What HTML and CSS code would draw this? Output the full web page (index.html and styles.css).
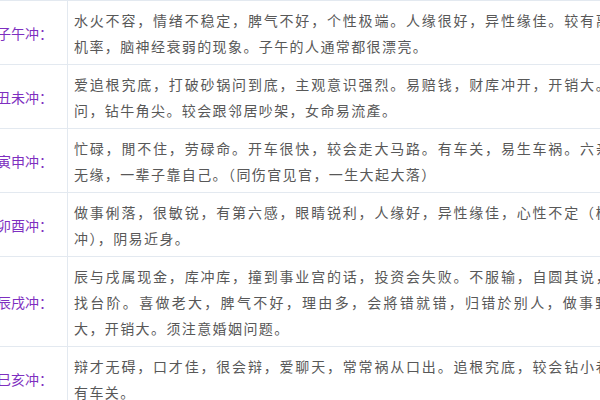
FILE: index.html
```html
<!DOCTYPE html>
<html lang="zh-CN">
<head>
<meta charset="utf-8">
<title>六冲</title>
<link rel="stylesheet" href="styles.css">
</head>
<body>
<div class="viewport">
  <div class="table">
    <div class="row">
      <div class="label">子午冲：</div>
      <div class="text">水火不容，情绪不稳定，脾气不好，个性极端。人缘很好，异性缘佳。较有离婚机率，脑神经衰弱的现象。子午的人通常都很漂亮。</div>
    </div>
    <div class="row">
      <div class="label">丑未冲：</div>
      <div class="text">爱追根究底，打破砂锅问到底，主观意识强烈。易赔钱，财库冲开，开销大。好问，钻牛角尖。较会跟邻居吵架，女命易流產。</div>
    </div>
    <div class="row">
      <div class="label">寅申冲：</div>
      <div class="text">忙碌，閒不住，劳碌命。开车很快，较会走大马路。有车关，易生车祸。六亲较无缘，一辈子靠自己。（同伤官见官，一生大起大落）</div>
    </div>
    <div class="row">
      <div class="label">卯酉冲：</div>
      <div class="text">做事俐落，很敏锐，有第六感，眼睛锐利，人缘好，异性缘佳，心性不定（桃花冲），阴易近身。</div>
    </div>
    <div class="row">
      <div class="label">辰戌冲：</div>
      <div class="text">辰与戌属现金，库冲库，撞到事业宫的话，投资会失败。不服输，自圆其说，会找台阶。喜做老大，脾气不好，理由多，会將错就错，归错於别人，做事野心大，开销大。须注意婚姻问题。</div>
    </div>
    <div class="row">
      <div class="label">巳亥冲：</div>
      <div class="text">辩才无碍，口才佳，很会辩，爱聊天，常常祸从口出。追根究底，较会钻小巷，有车关。</div>
    </div>
  </div>
</div>
</body>
</html>
```

FILE: styles.css
```css
html, body {
  margin: 0;
  padding: 0;
  overflow: hidden;
  background: #ffffff;
}

.viewport {
  width: 600px;
  height: 400px;
  overflow: hidden;
}

.table {
  margin-left: -20px;
  width: 720px;
  border-top: 1px solid #e3e9f0;
  font-family: "Noto Sans CJK SC", "Noto Sans", sans-serif;
  font-size: 14px;
  line-height: 26px;
}

.row {
  display: flex;
  border-bottom: 1px solid #e3e9f0;
}

.label {
  box-sizing: border-box;
  flex: 0 0 88px;
  display: flex;
  align-items: center;
  padding-left: 17px;
  border-right: 1px solid #e3e9f0;
  color: #7e2fc0;
}

.text {
  flex: 0 0 553px;
  padding: 6px 8px 5px 6px;
  color: #585858;
  letter-spacing: 1.4px;
  text-align: justify;
}
```
